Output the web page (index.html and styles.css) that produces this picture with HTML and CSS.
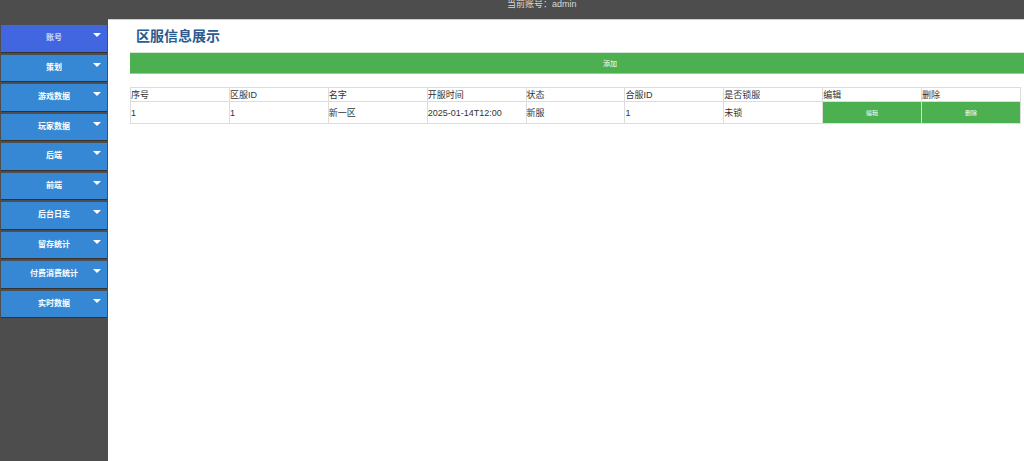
FILE: index.html
```html
<!DOCTYPE html>
<html lang="zh-CN">
<head>
  <meta charset="UTF-8" />
  <meta name="viewport" content="width=device-width, initial-scale=1.0" />
  <title>区服信息展示</title>
  <link rel="stylesheet" href="styles.css">
</head>
<body>
<div class="topbar">当前账号：admin</div>
<div class="layout">
  <div class="sidebar">
    <div class="menu-item active">账号</div>
    <div class="menu-item">策划</div>
    <div class="menu-item">游戏数据</div>
    <div class="menu-item">玩家数据</div>
    <div class="menu-item">后端</div>
    <div class="menu-item">前端</div>
    <div class="menu-item">后台日志</div>
    <div class="menu-item">留存统计</div>
    <div class="menu-item">付费消费统计</div>
    <div class="menu-item">实时数据</div>
  </div>
  <div class="content">
    <h2 class="page-title">区服信息展示</h2>
    <button class="add-btn">添加</button>
    <table class="server-table">
      <thead>
        <tr>
          <th>序号</th>
          <th>区服ID</th>
          <th>名字</th>
          <th>开服时间</th>
          <th>状态</th>
          <th>合服ID</th>
          <th>是否锁服</th>
          <th>编辑</th>
          <th>删除</th>
        </tr>
      </thead>
      <tbody>
        <tr>
          <td>1</td>
          <td>1</td>
          <td>新一区</td>
          <td>2025-01-14T12:00</td>
          <td>新服</td>
          <td>1</td>
          <td>未锁</td>
          <td class="btn-cell"><button class="row-btn">编辑</button></td>
          <td class="btn-cell"><button class="row-btn">删除</button></td>
        </tr>
      </tbody>
    </table>
  </div>
</div>
</body>
</html>
```

FILE: styles.css
```css
html, body {
  margin: 0;
  height: 100%;
  overflow: hidden;
}
body {
  font-family: "Liberation Sans", "Noto Sans CJK SC", sans-serif;
  background-color: #4d4d4d;
  display: flex;
  flex-direction: column;
}
.topbar {
  height: 19px;
  line-height: 9px;
  padding-left: 507px;
  font-size: 9px;
  color: #d8d8d8;
  box-sizing: border-box;
  overflow: hidden;
}
.layout {
  display: flex;
  flex: 1;
}
.sidebar {
  width: 108px;
  padding-top: 6px;
}
.menu-item {
  position: relative;
  margin-left: 1px;
  width: 106px;
  height: 26.5px;
  line-height: 26px;
  margin-bottom: 3px;
  background-color: #3788d4;
  color: #fff;
  font-size: 8px;
  font-weight: bold;
  text-align: center;
  box-shadow: 0 1px 0 #333;
}
.menu-item::after {
  content: "";
  position: absolute;
  right: 6px;
  top: 8px;
  border-left: 4px solid transparent;
  border-right: 4px solid transparent;
  border-top: 4px solid #fff;
}
.menu-item.active {
  background-color: #4166e0;
  color: #d4dcf4;
}
.content {
  flex: 1;
  background-color: #fff;
  border-top: 1px solid #cfcfcf;
  padding-left: 22px;
  overflow: hidden;
}
.page-title {
  margin: 8px 0 0 6px;
  font-size: 14px;
  line-height: 16px;
  color: #2b5b8f;
}
.add-btn {
  display: block;
  margin-top: 8px;
  width: 960px;
  height: 22px;
  padding: 0;
  border: none;
  border-top: 1px solid #d6e6d6;
  border-bottom: 1px solid #8fd191;
  background-color: #4caf50;
  color: #fff;
  font-family: inherit;
  font-size: 7px;
}
.server-table {
  margin-top: 13px;
  border-collapse: collapse;
  width: 891px;
  table-layout: fixed;
  font-size: 9px;
  color: #333;
}
.server-table th,
.server-table td {
  border: 1px solid #ddd;
  text-align: left;
  font-weight: normal;
  padding: 0;
}
.server-table th {
  height: 13px;
  line-height: 12px;
}
.server-table td {
  height: 21px;
  line-height: 18px;
}
.btn-cell {
  background-color: #4caf50;
}
.row-btn {
  display: block;
  width: 100%;
  height: 21px;
  padding: 0;
  border: none;
  background-color: #4caf50;
  color: #fff;
  font-family: inherit;
  font-size: 6px;
}
```
